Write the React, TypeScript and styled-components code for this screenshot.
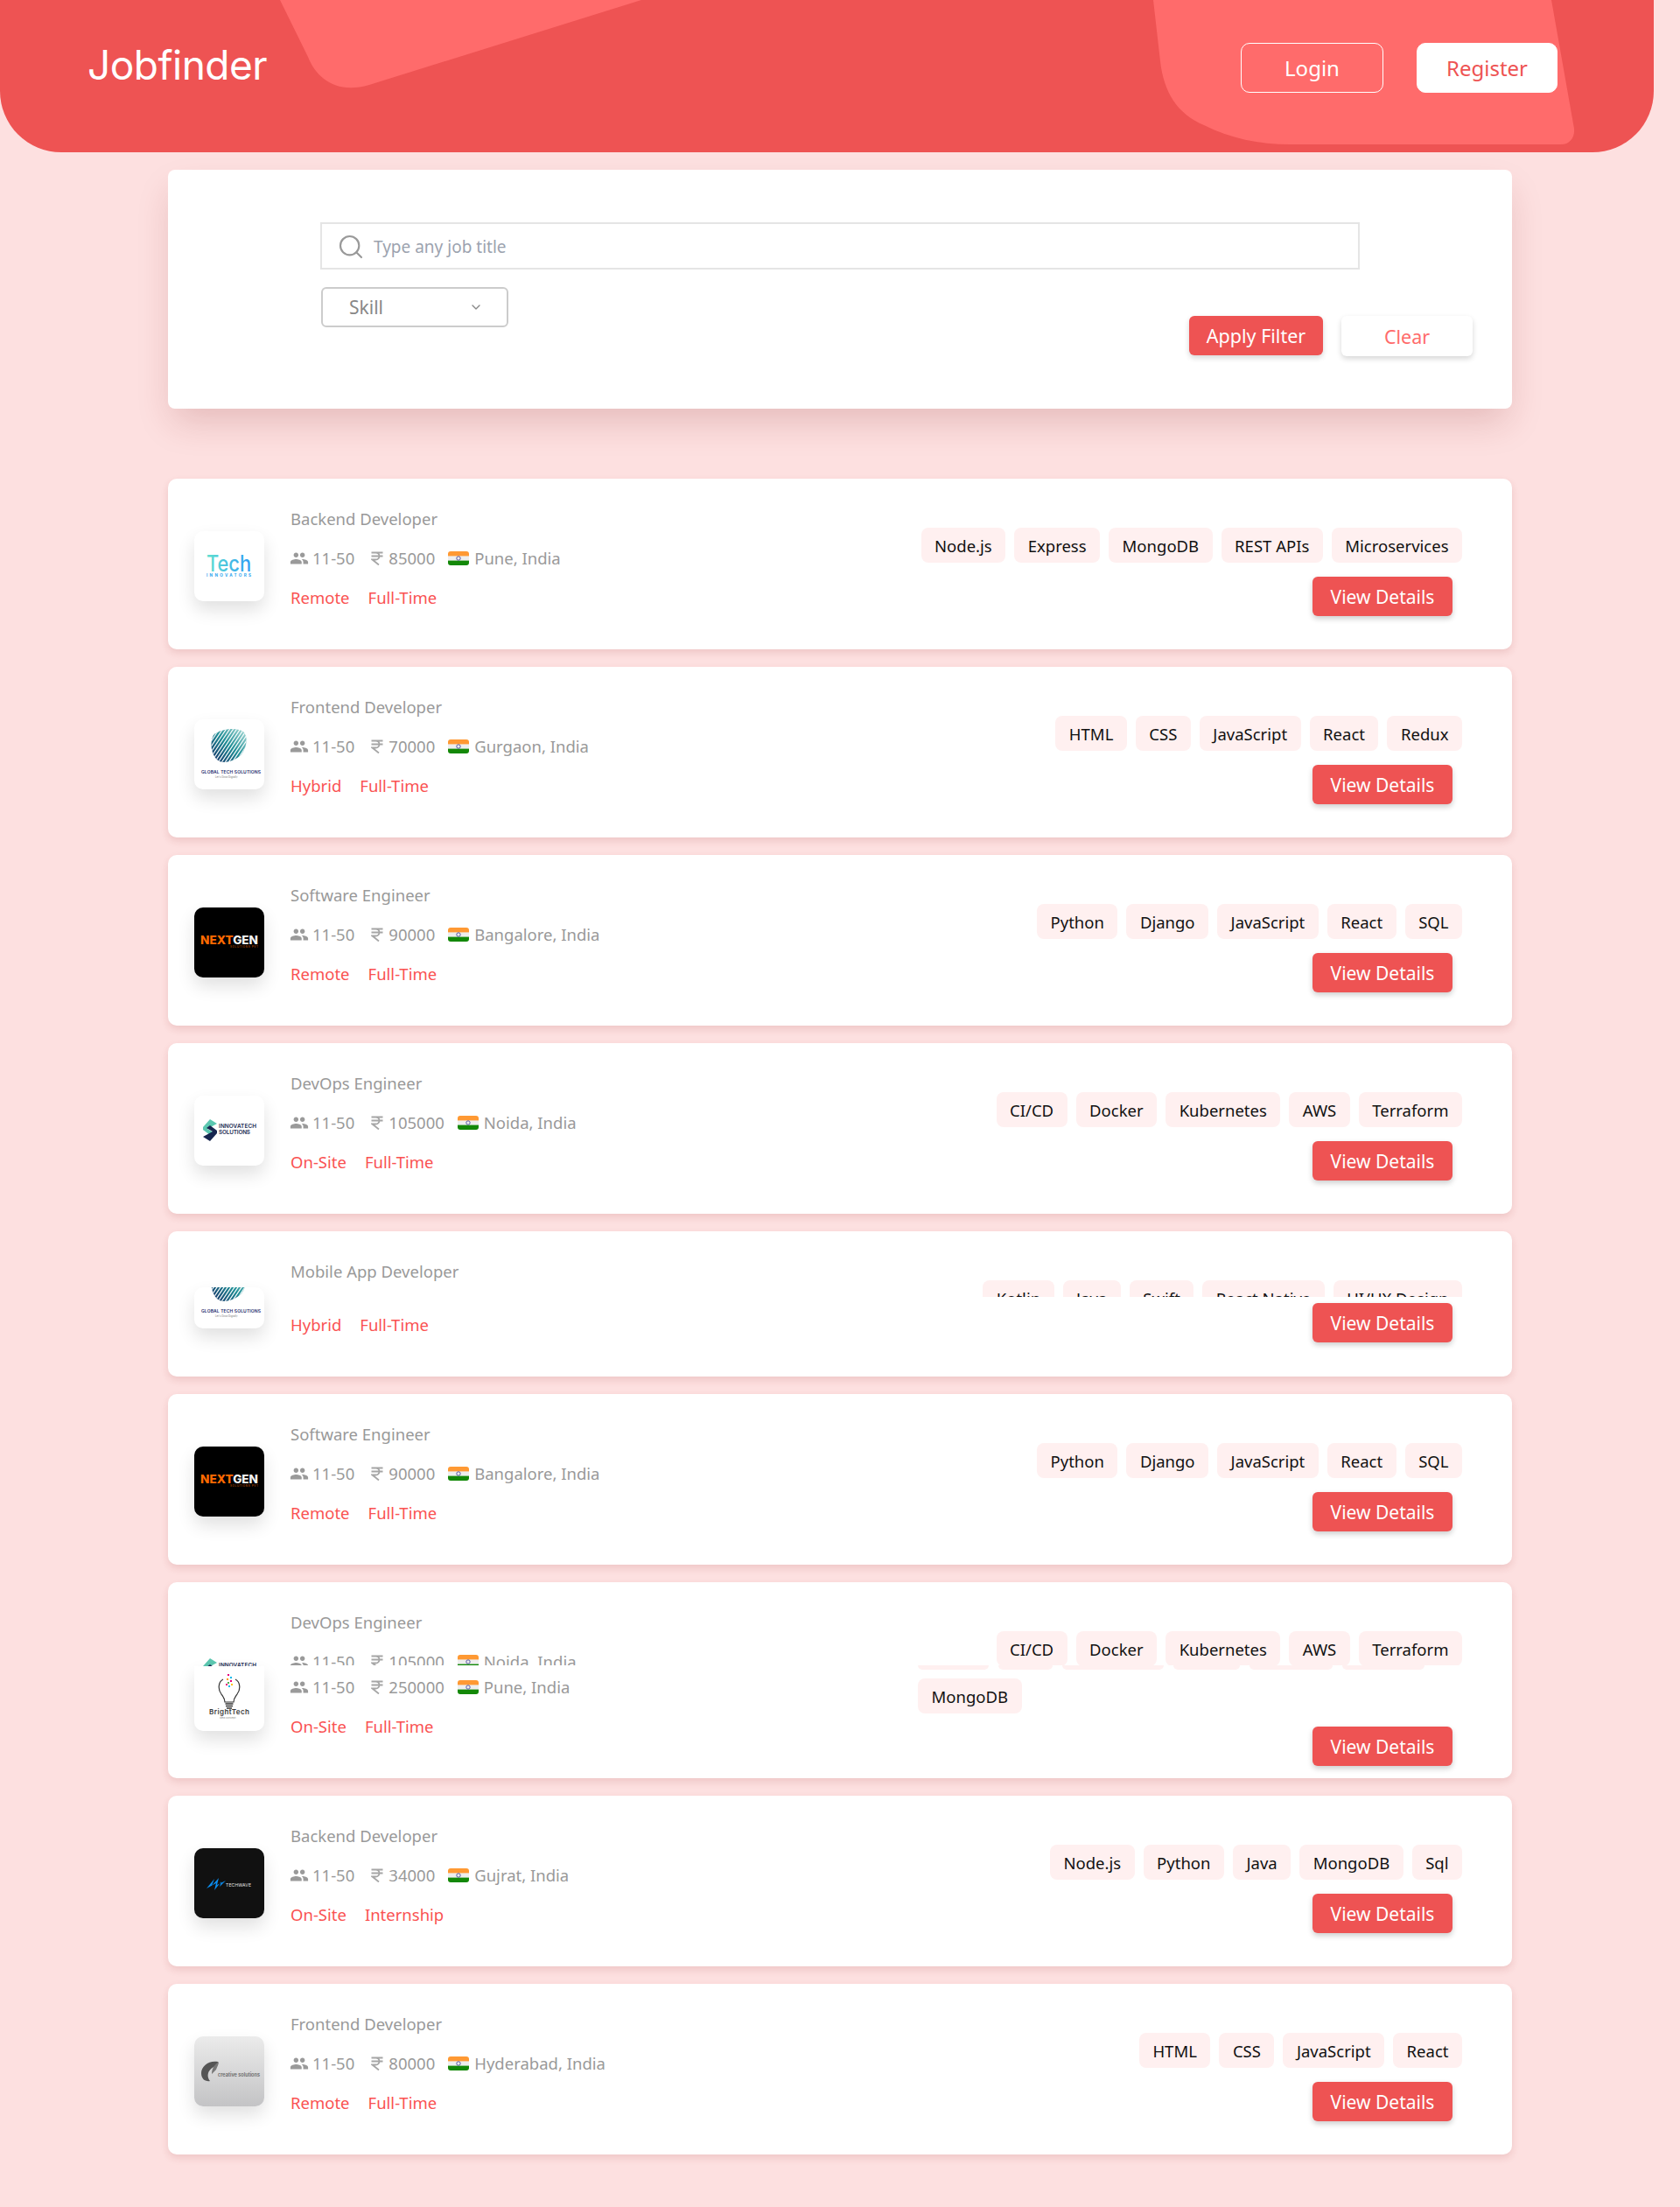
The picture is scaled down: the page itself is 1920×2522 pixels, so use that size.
import React, { ReactElement } from 'react';
import styled, { createGlobalStyle } from 'styled-components';
import { ChevronDown, Search } from 'lucide-react';
import { MdPeople } from 'react-icons/md';

const FONT = '"Noto Sans", "Open Sans", sans-serif';

const GlobalStyle = createGlobalStyle`
  html, body {
    margin: 0;
    padding: 0;
    background: #fde0e0;
    font-family: ${FONT};
  }
  * { box-sizing: border-box; }
`;

const Page = styled.div`
  width: 1920px;
  min-height: 2522px;
  padding-bottom: 60px;
`;

const Header = styled.header`
  position: relative;
  width: 1890px;
  height: 174px;
  background: #ee5353;
  border-radius: 0 0 70px 70px;
  overflow: hidden;
`;

const HeaderShapes = styled.svg`
  position: absolute;
  inset: 0;
`;

const Nav = styled.nav`
  position: relative;
  display: flex;
  align-items: flex-start;
  justify-content: space-between;
  padding: 49px 110px 0 100px;
`;

const Brand = styled.div`
  font-family: Inter, sans-serif;
  font-size: 46px;
  font-weight: 400;
  line-height: 50px;
  color: #fff;
  letter-spacing: -0.5px;
`;

const NavActions = styled.div`
  display: flex;
  gap: 38px;
`;

const NavButton = styled.button<{ $solid?: boolean }>`
  width: ${(p) => (p.$solid ? 161 : 163)}px;
  height: 57px;
  border-radius: 10px;
  border: 1px solid #fff;
  background: ${(p) => (p.$solid ? '#fff' : 'transparent')};
  color: ${(p) => (p.$solid ? '#ee5353' : '#fff')};
  font-family: ${FONT};
  font-size: 24px;
`;

const Main = styled.main`
  width: 1536px;
  margin: 20px 0 0 192px;
`;

const FilterCard = styled.section`
  height: 273px;
  padding: 60px 45px 0 174px;
  background: #fff;
  border-radius: 8px;
  box-shadow: 0 20px 40px -5px rgba(120, 20, 20, 0.18);
`;

const SearchBox = styled.div`
  display: flex;
  align-items: center;
  gap: 10px;
  width: 1188px;
  height: 54px;
  padding: 2px 0 0 17px;
  border: 2px solid #e5e5e5;
  color: #999;
`;

const SearchText = styled.span`
  font-size: 19px;
  color: #9ca3af;
`;

const FilterRow = styled.div`
  display: flex;
  align-items: flex-start;
  margin-top: 20px;
`;

const SkillSelect = styled.div`
  display: flex;
  align-items: center;
  justify-content: space-between;
  width: 214px;
  height: 46px;
  margin-left: 1px;
  padding: 0 27px 0 30px;
  border: 2px solid #ccc;
  border-radius: 6px;
  font-size: 21px;
  color: #888;
`;

const FilterActions = styled.div`
  display: flex;
  gap: 21px;
  margin: 33px 0 0 auto;
`;

const FilterButton = styled.button<{ $plain?: boolean }>`
  width: ${(p) => (p.$plain ? 150 : 153)}px;
  height: ${(p) => (p.$plain ? 46 : 45)}px;
  border: 0;
  border-radius: 6px;
  background: ${(p) => (p.$plain ? '#fff' : '#ee5353')};
  color: ${(p) => (p.$plain ? '#ff6b6b' : '#fff')};
  font-family: ${FONT};
  font-size: 21.5px;
  box-shadow: 0 3px 6px rgba(0, 0, 0, 0.16);
`;

const JobList = styled.section`
  display: flex;
  flex-direction: column;
  gap: 20px;
  margin-top: 80px;
`;

const JobCard = styled.article<{ $bottom: number }>`
  display: flex;
  justify-content: space-between;
  align-items: flex-start;
  padding: 32px 57px ${(p) => p.$bottom}px 30px;
  background: #fff;
  border-radius: 10px;
  box-shadow: 0 4px 8px rgba(150, 40, 40, 0.14);
`;

const LeftGroup = styled.div`
  display: flex;
  align-items: flex-start;
  gap: 30px;
`;

const LogoColumn = styled.div`
  display: flex;
  flex-direction: column;
  width: 80px;
`;

const LogoBox = styled.div<{
  $height: number;
  $top: number;
  $bg: string;
  $cut?: 'top' | 'bottom';
}>`
  display: flex;
  flex-direction: column;
  justify-content: ${(p) => (p.$cut === 'bottom' ? 'flex-start' : 'flex-end')};
  width: 80px;
  height: ${(p) => p.$height}px;
  margin-top: ${(p) => p.$top}px;
  overflow: hidden;
  background: ${(p) => p.$bg};
  border-radius: ${(p) =>
    p.$cut === 'bottom'
      ? '10px 10px 0 0'
      : p.$cut === 'top'
        ? '0 0 10px 10px'
        : '10px'};
  box-shadow: ${(p) =>
    p.$cut === 'bottom' ? 'none' : '0 10px 20px rgba(0, 0, 0, 0.12)'};

  svg {
    flex: none;
    display: block;
  }
`;

const TextColumn = styled.div`
  display: flex;
  flex-direction: column;
`;

const JobTitle = styled.div`
  font-size: 18.5px;
  line-height: 27px;
  color: #999;
`;

const MetaClip = styled.div<{ $height: number; $after: number }>`
  height: ${(p) => p.$height}px;
  margin-top: 18px;
  margin-bottom: ${(p) => p.$after}px;
  overflow: hidden;
`;

const MetaRow = styled.div<{ $top?: number }>`
  display: flex;
  align-items: center;
  height: 27px;
  margin-top: ${(p) => p.$top ?? 18}px;
  font-size: 18.5px;
  color: #999;
`;

const MetaSpacer = styled.div`
  height: 16px;
`;

const PeopleIcon = styled(MdPeople)`
  margin: 0 4px 0 -1px;
  color: #9a9a9a;
`;

const MetaNumber = styled.span`
  margin-right: 19px;
`;

const RupeeIcon = styled.svg`
  margin-right: 6px;
`;

const FlagIcon = styled.svg`
  margin: 0 6px 0 15px;
`;

const ModeRow = styled.div`
  display: flex;
  gap: 21px;
  height: 27px;
  margin-top: 18px;
  font-size: 18.5px;
  line-height: 27px;
  color: #fa5252;
`;

const RightGroup = styled.div`
  display: flex;
  flex-direction: column;
  align-items: flex-end;
  margin-top: 24px;
`;

const TagClip = styled.div<{ $height?: number }>`
  height: ${(p) => p.$height ?? 40}px;
  overflow: hidden;
`;

const TagRow = styled.div<{ $start?: boolean }>`
  display: flex;
  justify-content: ${(p) => (p.$start ? 'flex-start' : 'flex-end')};
  gap: 10px;
`;

const Tag = styled.span`
  display: flex;
  align-items: center;
  height: 40px;
  padding: 0 15.5px;
  border-radius: 8px;
  background: #fff0f0;
  font-size: 18.5px;
  color: #111;
`;

const SpillBlock = styled.div`
  width: 622px;
`;

const SliverRow = styled.div`
  display: flex;
  gap: 11px;
  margin-bottom: 10px;
`;

const Sliver = styled.span<{ $width: number }>`
  width: ${(p) => p.$width}px;
  height: 5px;
  border-radius: 0 0 8px 8px;
  background: #fff0f0;
`;

const DetailsButton = styled.button<{ $top: number }>`
  width: 160px;
  height: 45px;
  margin: ${(p) => p.$top}px 11px 0 0;
  border: 0;
  border-radius: 6px;
  background: #ee5353;
  color: #fff;
  font-family: ${FONT};
  font-size: 21px;
  box-shadow: 0 3px 6px rgba(0, 0, 0, 0.2);
`;

function Flag(): ReactElement {
  return (
    <FlagIcon width="24" height="16" viewBox="0 0 24 16">
      <defs>
        <clipPath id="flag-clip">
          <rect width="24" height="16" rx="3" />
        </clipPath>
      </defs>
      <g clipPath="url(#flag-clip)">
        <rect width="24" height="6" fill="#ff9933" />
        <rect y="5.4" width="24" height="5.4" fill="#eeeeee" />
        <rect y="10.6" width="24" height="5.4" fill="#138808" />
      </g>
      <circle cx="12" cy="8" r="2.2" fill="none" stroke="#4a4a9c" strokeWidth="0.9" />
    </FlagIcon>
  );
}

function Rupee(): ReactElement {
  return (
    <RupeeIcon width="14" height="16" viewBox="0 0 14 16" fill="none" stroke="#a6a6a6" strokeWidth="1.8">
      <path d="M0.5 1.5H13.5M0.5 5.5H13.5M1 1.5H5.5a4 4 0 0 1 0 8H1.5L9 15.5" />
    </RupeeIcon>
  );
}

function TechLogo(): ReactElement {
  return (
    <svg width="80" height="80" viewBox="0 0 80 80">
      <defs>
        <linearGradient id="tech-grad" x1="0" x2="1" y1="0" y2="0">
          <stop offset="0" stopColor="#5fe0cf" />
          <stop offset="1" stopColor="#2f9df5" />
        </linearGradient>
      </defs>
      <text x="14" y="46" fontFamily="Inter, sans-serif" fontSize="25" fontWeight="500" textLength="51" lengthAdjust="spacingAndGlyphs" fill="url(#tech-grad)">
        Tech
      </text>
      <text x="14" y="52" fontFamily="Inter, sans-serif" fontSize="4.6" fontWeight="700" textLength="51" fill="#2fa5ee">
        INNOVATORS
      </text>
    </svg>
  );
}

function GlobalLogo({ id }: { id: string }): ReactElement {
  const stripes = Array.from({ length: 15 }, (_, i) => i * 4 - 8);
  return (
    <svg width="80" height="80" viewBox="0 0 80 80">
      <defs>
        <clipPath id={id}>
          <path d="M22 18C28 12 46 8 56 14C62 20 60 32 54 40C46 48 32 52 26 46C20 40 17 28 22 18Z" />
        </clipPath>
        <linearGradient id={`${id}-g`} x1="0" y1="1" x2="1" y2="0">
          <stop offset="0" stopColor="#14205f" />
          <stop offset="0.5" stopColor="#1f8d95" />
          <stop offset="1" stopColor="#c4ebe4" />
        </linearGradient>
      </defs>
      <g clipPath={`url(#${id})`}>
        <rect x="18" y="8" width="44" height="44" fill={`url(#${id}-g)`} />
        {stripes.map((s) => (
          <line key={s} x1={s + 4} y1="60" x2={s + 44} y2="0" stroke="#fff" strokeWidth="1.2" />
        ))}
      </g>
      <text x="8" y="62" fontFamily="Inter, sans-serif" fontSize="5" fontWeight="600" textLength="68" fill="#1c2a6b">
        GLOBAL TECH SOLUTIONS
      </text>
      <text x="24" y="67" fontFamily="Inter, sans-serif" fontSize="2.8" fill="#777">
        Let's Grow Digitally
      </text>
    </svg>
  );
}

function NextGenLogo(): ReactElement {
  return (
    <svg width="80" height="80" viewBox="0 0 80 80">
      <text x="7" y="42" fontFamily="Inter, sans-serif" fontSize="12.5" fontWeight="800" textLength="66" lengthAdjust="spacingAndGlyphs">
        <tspan fill="#ff6a00">NEXT</tspan>
        <tspan fill="#f2f2f2">GEN</tspan>
      </text>
      <text x="41" y="46" fontFamily="Inter, sans-serif" fontSize="3" fill="#d95c00" textLength="32">
        SOLUTIONS PVT
      </text>
    </svg>
  );
}

function InnovatechLogo(): ReactElement {
  return (
    <svg width="80" height="80" viewBox="0 0 80 80">
      <path d="M18 27L26 32L15 38L22 42L18 45L10 39V36Z" fill="#5cc7b0" />
      <path d="M18 52L10 47L21 41L14 37L18 34L26 40V43Z" fill="#17264f" />
      <text x="28" y="37" fontFamily="Inter, sans-serif" fontSize="6.4" fontWeight="600" textLength="43" fill="#1a2a52">
        INNOVATECH
      </text>
      <text x="28" y="44" fontFamily="Inter, sans-serif" fontSize="6.4" fontWeight="600" textLength="36" fill="#1a2a52">
        SOLUTIONS
      </text>
    </svg>
  );
}

function BrightTechLogo(): ReactElement {
  const dots: [number, number, string][] = [
    [38, 9, '#e6007e'], [41, 12, '#00b7eb'], [37, 14, '#ff9800'], [41, 16, '#e6007e'],
    [38, 18, '#4caf50'], [42, 20, '#ffc107'], [39, 22, '#00b7eb'], [36, 20, '#e6007e']
  ];
  return (
    <svg width="80" height="74" viewBox="0 0 80 74">
      <path d="M33 15C27 18 27 27 31 32C33 35 35 37 35 41H45C45 37 47 35 49 32C53 27 53 18 47 15" fill="none" stroke="#333" strokeWidth="1.2" />
      <path d="M35.5 43H44.5M36 45.5H44M37 48H43" stroke="#333" strokeWidth="1.6" />
      {dots.map(([x, y, c]) => (
        <rect key={`${x}-${y}`} x={x} y={y} width="2" height="2" fill={c} />
      ))}
      <text x="17" y="55" fontFamily="Inter, sans-serif" fontSize="8" fontWeight="600" textLength="46" fill="#3a3a3a">
        BrightTech
      </text>
      <text x="29" y="60" fontFamily="Inter, sans-serif" fontSize="3" fill="#888">
        idea concept
      </text>
    </svg>
  );
}

function TechwaveLogo(): ReactElement {
  return (
    <svg width="80" height="80" viewBox="0 0 80 80">
      <path d="M14 46L23 35L20 43L28 34L26 42L36 37L29 44L31 38L23 48L25 40Z" fill="#0a8df0" />
      <text x="36" y="44" fontFamily="Inter, sans-serif" fontSize="5" textLength="29" fill="#e6e6e6">
        TECHWAVE
      </text>
    </svg>
  );
}

function CreativeLogo(): ReactElement {
  return (
    <svg width="80" height="80" viewBox="0 0 80 80">
      <path d="M27 29C17 27 8 34 8 42C8 49 13 52 18 51C14 46 14 37 27 33Z" fill="#555" />
      <path d="M28 29C22 33 20 38 20 43L25 38C26 35 28 32 28 29Z" fill="#777" />
      <text x="27" y="46" fontFamily="Inter, sans-serif" fontSize="5.6" fontWeight="600" textLength="48" fill="#666">
        creative solutions
      </text>
    </svg>
  );
}

type LogoKind = 'tech' | 'global' | 'nextgen' | 'innovatech' | 'techwave' | 'creative';

interface Job {
  title: string;
  pay: string;
  city: string;
  mode: string;
  kind: string;
  logo: LogoKind;
  skills: string[];
  layout?: 'collapsed' | 'spill';
}

const jobs: Job[] = [
  { title: 'Backend Developer', pay: '85000', city: 'Pune, India', mode: 'Remote', kind: 'Full-Time', logo: 'tech', skills: ['Node.js', 'Express', 'MongoDB', 'REST APIs', 'Microservices'] },
  { title: 'Frontend Developer', pay: '70000', city: 'Gurgaon, India', mode: 'Hybrid', kind: 'Full-Time', logo: 'global', skills: ['HTML', 'CSS', 'JavaScript', 'React', 'Redux'] },
  { title: 'Software Engineer', pay: '90000', city: 'Bangalore, India', mode: 'Remote', kind: 'Full-Time', logo: 'nextgen', skills: ['Python', 'Django', 'JavaScript', 'React', 'SQL'] },
  { title: 'DevOps Engineer', pay: '105000', city: 'Noida, India', mode: 'On-Site', kind: 'Full-Time', logo: 'innovatech', skills: ['CI/CD', 'Docker', 'Kubernetes', 'AWS', 'Terraform'] },
  { title: 'Mobile App Developer', pay: '', city: '', mode: 'Hybrid', kind: 'Full-Time', logo: 'global', skills: ['Kotlin', 'Java', 'Swift', 'React Native', 'UI/UX Design'], layout: 'collapsed' },
  { title: 'Software Engineer', pay: '90000', city: 'Bangalore, India', mode: 'Remote', kind: 'Full-Time', logo: 'nextgen', skills: ['Python', 'Django', 'JavaScript', 'React', 'SQL'] },
  { title: 'DevOps Engineer', pay: '105000', city: 'Noida, India', mode: 'On-Site', kind: 'Full-Time', logo: 'innovatech', skills: ['CI/CD', 'Docker', 'Kubernetes', 'AWS', 'Terraform'], layout: 'spill' },
  { title: 'Backend Developer', pay: '34000', city: 'Gujrat, India', mode: 'On-Site', kind: 'Internship', logo: 'techwave', skills: ['Node.js', 'Python', 'Java', 'MongoDB', 'Sql'] },
  { title: 'Frontend Developer', pay: '80000', city: 'Hyderabad, India', mode: 'Remote', kind: 'Full-Time', logo: 'creative', skills: ['HTML', 'CSS', 'JavaScript', 'React'] }
];

const logoBackground: Record<LogoKind, string> = {
  tech: '#fff',
  global: '#fff',
  nextgen: '#000',
  innovatech: '#fff',
  techwave: '#111',
  creative: 'linear-gradient(#ebebeb, #c3c3c5)'
};

function renderLogo(kind: LogoKind, id: string): ReactElement {
  switch (kind) {
    case 'tech':
      return <TechLogo />;
    case 'global':
      return <GlobalLogo id={id} />;
    case 'nextgen':
      return <NextGenLogo />;
    case 'innovatech':
      return <InnovatechLogo />;
    case 'techwave':
      return <TechwaveLogo />;
    default:
      return <CreativeLogo />;
  }
}

function Meta({ pay, city }: { pay: string; city: string }): ReactElement {
  return (
    <>
      <PeopleIcon size={22} />
      <MetaNumber>11-50</MetaNumber>
      <Rupee />
      <span>{pay}</span>
      <Flag />
      <span>{city}</span>
    </>
  );
}

const sliverWidths = [81, 62, 116, 76, 95, 94];

function JobRow({ job, index }: { job: Job; index: number }): ReactElement {
  const id = `logo-${index}`;
  const bg = logoBackground[job.logo];
  const bottom = job.layout === 'spill' ? 14 : job.layout === 'collapsed' ? 39 : 38;

  return (
    <JobCard $bottom={bottom}>
      <LeftGroup>
        <LogoColumn>
          {job.layout === 'spill' ? (
            <>
              <LogoBox $height={36} $top={28} $bg={bg} $cut="bottom">
                {renderLogo(job.logo, id)}
              </LogoBox>
              <LogoBox $height={74} $top={0} $bg="#fff" $cut="top">
                <BrightTechLogo />
              </LogoBox>
            </>
          ) : job.layout === 'collapsed' ? (
            <LogoBox $height={47} $top={32} $bg={bg}>
              {renderLogo(job.logo, id)}
            </LogoBox>
          ) : (
            <LogoBox $height={80} $top={28} $bg={bg}>
              {renderLogo(job.logo, id)}
            </LogoBox>
          )}
        </LogoColumn>
        <TextColumn>
          <JobTitle>{job.title}</JobTitle>
          {job.layout === 'collapsed' && <MetaSpacer />}
          {job.layout === 'spill' && (
            <>
              <MetaClip $height={18} $after={11}>
                <MetaRow $top={0}>
                  <Meta pay={job.pay} city={job.city} />
                </MetaRow>
              </MetaClip>
              <MetaRow $top={0}>
                <Meta pay="250000" city="Pune, India" />
              </MetaRow>
            </>
          )}
          {!job.layout && (
            <MetaRow>
              <Meta pay={job.pay} city={job.city} />
            </MetaRow>
          )}
          <ModeRow>
            <span>{job.mode}</span>
            <span>{job.kind}</span>
          </ModeRow>
        </TextColumn>
      </LeftGroup>
      <RightGroup>
        {job.layout === 'spill' ? (
          <SpillBlock>
            <TagClip $height={39}>
              <TagRow>
                {job.skills.map((s) => (
                  <Tag key={s}>{s}</Tag>
                ))}
              </TagRow>
            </TagClip>
            <SliverRow>
              {sliverWidths.map((w, i) => (
                <Sliver key={i} $width={w} />
              ))}
            </SliverRow>
            <TagRow $start>
              <Tag>MongoDB</Tag>
            </TagRow>
          </SpillBlock>
        ) : (
          <TagClip $height={job.layout === 'collapsed' ? 19 : 40}>
            <TagRow>
              {job.skills.map((s) => (
                <Tag key={s}>{s}</Tag>
              ))}
            </TagRow>
          </TagClip>
        )}
        <DetailsButton $top={job.layout === 'collapsed' ? 7 : job.layout === 'spill' ? 15 : 16}>
          View Details
        </DetailsButton>
      </RightGroup>
    </JobCard>
  );
}

export default function App(): ReactElement {
  return (
    <Page>
      <GlobalStyle />
      <Header>
        <HeaderShapes width="1890" height="174" viewBox="0 0 1890 174">
          <path d="M320 0L352 65C362 90 385 108 422 97L733 0Z" fill="#ff6b6b" />
          <path d="M1318 0L1326 70C1330 105 1345 130 1376 143C1405 158 1440 165 1474 165H1784C1794 165 1800 157 1799 147L1773 0Z" fill="#ff6b6b" />
        </HeaderShapes>
        <Nav>
          <Brand>Jobfinder</Brand>
          <NavActions>
            <NavButton>Login</NavButton>
            <NavButton $solid>Register</NavButton>
          </NavActions>
        </Nav>
      </Header>
      <Main>
        <FilterCard>
          <SearchBox>
            <Search size={32} strokeWidth={1.6} />
            <SearchText>Type any job title</SearchText>
          </SearchBox>
          <FilterRow>
            <SkillSelect>
              <span>Skill</span>
              <ChevronDown size={16} />
            </SkillSelect>
            <FilterActions>
              <FilterButton>Apply Filter</FilterButton>
              <FilterButton $plain>Clear</FilterButton>
            </FilterActions>
          </FilterRow>
        </FilterCard>
        <JobList>
          {jobs.map((job, i) => (
            <JobRow key={i} job={job} index={i} />
          ))}
        </JobList>
      </Main>
    </Page>
  );
}
